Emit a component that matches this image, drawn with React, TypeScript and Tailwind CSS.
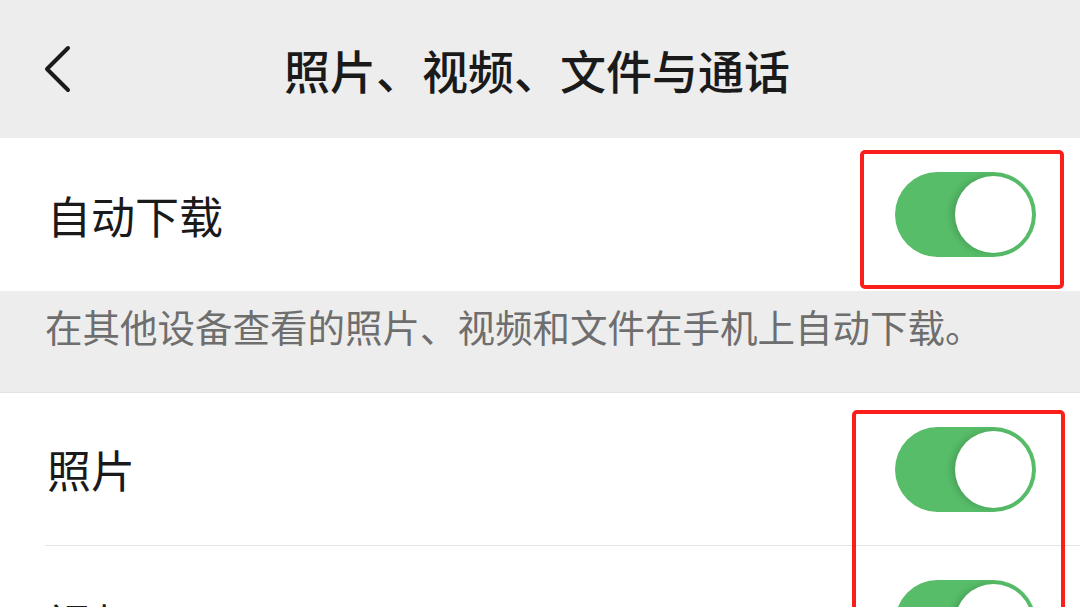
import React from "react";

const font = { fontFamily: '"Noto Sans CJK SC", "Noto Sans", sans-serif' };

function Toggle() {
  return (
    <div className="w-[141px] h-[85px] rounded-full bg-[#57bd69] flex items-center justify-end pr-[4px]">
      <div className="w-[77px] h-[77px] rounded-full bg-white shadow-[-4px_0_6px_rgba(0,0,0,0.14)]" />
    </div>
  );
}

function Row({ label, divider }: { label: string; divider?: boolean }) {
  return (
    <div className="bg-white pl-[45px]">
      <div
        className={
          "h-[153px] flex items-center justify-between pr-[44px] " +
          (divider ? "border-b border-[#e3e3e3]" : "")
        }
      >
        <span className="text-[44px] leading-none text-[#1a1a1a] pl-[2px]">{label}</span>
        <Toggle />
      </div>
    </div>
  );
}

export default function App() {
  return (
    <div className="relative w-[1080px] h-[607px] overflow-hidden bg-white" style={font}>
      <div className="h-[138px] bg-[#ededed] grid grid-cols-[1fr_auto_1fr] items-center">
        <div className="pl-[43px] flex items-center">
          <svg width="30" height="48" viewBox="0 0 30 48" fill="none">
            <path d="M25 3 L4 24 L25 45" stroke="#1a1a1a" strokeWidth="4" strokeLinecap="round" strokeLinejoin="round" />
          </svg>
        </div>
        <div className="text-[46px] leading-none text-[#1a1a1a] font-medium pr-[6px]">
          照片、视频、文件与通话
        </div>
        <div />
      </div>
      <Row label="自动下载" />
      <div className="h-[102px] bg-[#ededed] border-b border-[#e3e3e3] pl-[45px] pt-[12px]">
        <span className="text-[37.5px] leading-[1.2] text-[#6e6e6e]">
          在其他设备查看的照片、视频和文件在手机上自动下载。
        </span>
      </div>
      <Row label="照片" divider />
      <Row label="视频" />

      <div className="absolute left-[860px] top-[150px] w-[204px] h-[139px] border-[4px] border-[#fb1f1b] rounded-[5px]" />
      <div className="absolute left-[852px] top-[410px] w-[213px] h-[260px] border-[4px] border-[#fb1f1b] rounded-[5px]" />
    </div>
  );
}
